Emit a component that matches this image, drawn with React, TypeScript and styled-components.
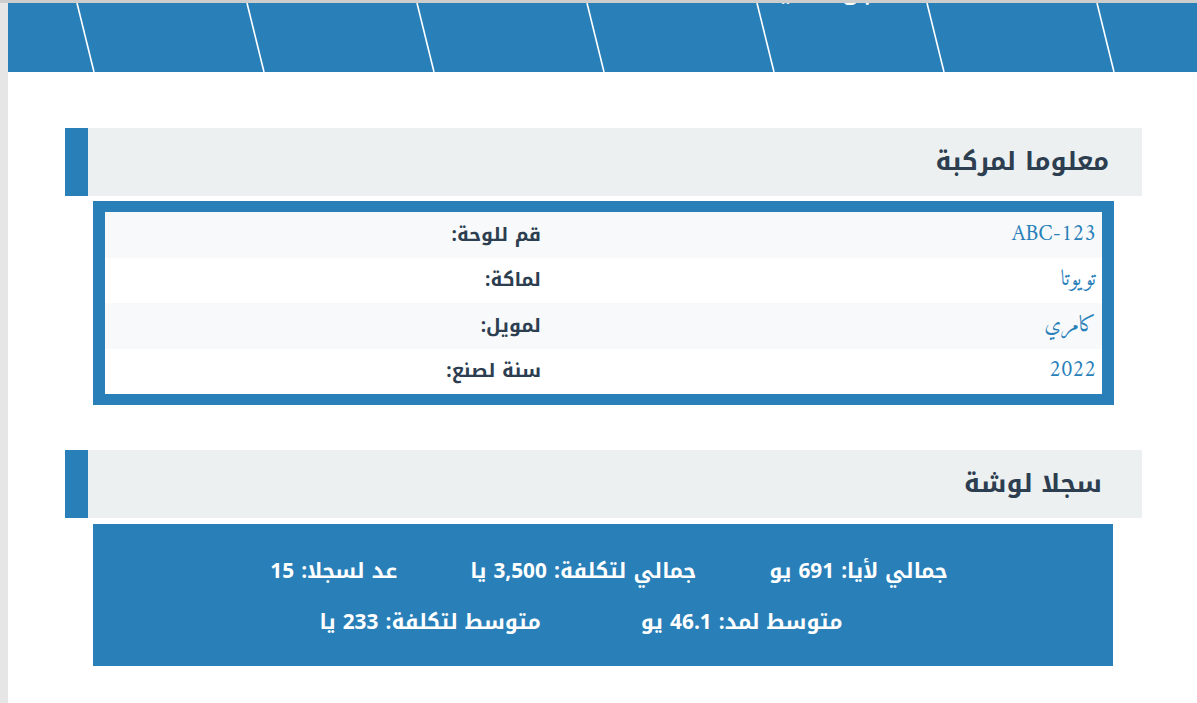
import React from "react";
import styled, { createGlobalStyle } from "styled-components";

const GlobalStyle = createGlobalStyle`
  html, body {
    margin: 0;
    padding: 0;
    background: #ffffff;
  }
  body {
    font-family: "Noto Kufi Arabic", "Noto Sans", sans-serif;
  }
  * { box-sizing: border-box; }
`;

const Page = styled.div`
  display: flex;
  min-height: 703px;
  border-top: 3px solid #cdcdcd;
  direction: rtl;
`;

const Main = styled.div`
  flex: 1;
  display: flex;
  flex-direction: column;
`;

const Gutter = styled.div`
  width: 8px;
  flex: none;
  background: #e6e6e6;
`;

const Hero = styled.header`
  position: relative;
  height: 69px;
  overflow: hidden;
  background: #2980b9;
  display: flex;
  justify-content: flex-start;
`;

const HeroLines = styled.svg`
  position: absolute;
  inset: 0;
  width: 100%;
  height: 100%;
`;

const HeroTitle = styled.h1`
  position: relative;
  margin: -36px 0 0 0;
  padding-right: 296px;
  font-size: 28px;
  line-height: 44px;
  font-weight: 400;
  color: #ffffff;
  white-space: nowrap;
`;

const Content = styled.main`
  display: flex;
  flex-direction: column;
  gap: 45px;
  padding: 56px 55px 40px 57px;
`;

const Section = styled.section`
  display: flex;
  flex-direction: column;
  gap: 5px;
`;

const SectionHead = styled.div<{ $inset: number }>`
  height: 68px;
  display: flex;
  align-items: center;
  background: #ecf0f1;
  border-left: 23px solid #2980b9;
  padding-right: ${(p) => p.$inset}px;
`;

const SectionTitle = styled.h2`
  margin: 0;
  font-size: 25.6px;
  line-height: 38px;
  font-weight: 700;
  color: #2c3e50;
`;

const InfoBox = styled.div`
  margin: 0 28px;
  border: solid #2980b9;
  border-width: 11px 12px;
`;

const InfoRow = styled.div<{ $shade: boolean }>`
  display: grid;
  grid-template-columns: 554px 1fr;
  align-items: center;
  height: 45.5px;
  background: ${(p) => (p.$shade ? "#f7f9fa" : "#ffffff")};
`;

const InfoValue = styled.div`
  padding: 0 6px;
  font-family: "Amiri", "Liberation Serif", serif;
  font-size: 22px;
  line-height: 30px;
  color: #2980b9;
  text-align: right;
`;

const InfoLabel = styled.div`
  padding: 0 7px;
  font-size: 19px;
  line-height: 28px;
  font-weight: 700;
  color: #2c3e50;
  text-align: right;
`;

const StatsBox = styled.div`
  margin: 1px 29px 0 28px;
  background: #2980b9;
  padding: 34px 20px 30px;
  display: flex;
  flex-direction: column;
  gap: 24px;
`;

const StatsRow = styled.div<{ $gap: number; $shift: number }>`
  display: flex;
  justify-content: center;
  gap: ${(p) => p.$gap}px;
  padding-right: ${(p) => (p.$shift > 0 ? p.$shift : 0)}px;
  padding-left: ${(p) => (p.$shift < 0 ? -p.$shift : 0)}px;
`;

const Stat = styled.span`
  font-size: 20.8px;
  line-height: 27px;
  font-weight: 700;
  color: #ffffff;
  white-space: nowrap;
`;

const vehicleRows = [
  { label: "قم للوحة:", value: "ABC-123" },
  { label: "لماكة:", value: "تويوتا" },
  { label: "لمويل:", value: "كامري" },
  { label: "سنة لصنع:", value: "2022" },
];

export default function App() {
  return (
    <>
      <GlobalStyle />
      <Page>
        <Main>
          <Hero>
            <HeroLines aria-hidden="true">
              <defs>
                <pattern id="diag" width="170" height="69" patternUnits="userSpaceOnUse">
                  <line x1="69" y1="0" x2="86" y2="69" stroke="#ffffff" strokeWidth="1.6" />
                </pattern>
              </defs>
              <rect width="100%" height="100%" fill="url(#diag)" />
            </HeroLines>
            <HeroTitle>سجل الصيانة</HeroTitle>
          </Hero>
          <Content>
            <Section>
              <SectionHead $inset={33}>
                <SectionTitle>معلوما لمركبة</SectionTitle>
              </SectionHead>
              <InfoBox>
                {vehicleRows.map((r, i) => (
                  <InfoRow key={r.label} $shade={i % 2 === 0}>
                    <InfoValue>{r.value}</InfoValue>
                    <InfoLabel>{r.label}</InfoLabel>
                  </InfoRow>
                ))}
              </InfoBox>
            </Section>
            <Section>
              <SectionHead $inset={40}>
                <SectionTitle>سجلا لوشة</SectionTitle>
              </SectionHead>
              <StatsBox>
                <StatsRow $gap={73} $shift={-12}>
                  <Stat>جمالي لأيا: 691 يو</Stat>
                  <Stat>جمالي لتكلفة: 3,500 يا</Stat>
                  <Stat>عد لسجلا: 15</Stat>
                </StatsRow>
                <StatsRow $gap={100} $shift={44}>
                  <Stat>متوسط لمد: 46.1 يو</Stat>
                  <Stat>متوسط لتكلفة: 233 يا</Stat>
                </StatsRow>
              </StatsBox>
            </Section>
          </Content>
        </Main>
        <Gutter />
      </Page>
    </>
  );
}
